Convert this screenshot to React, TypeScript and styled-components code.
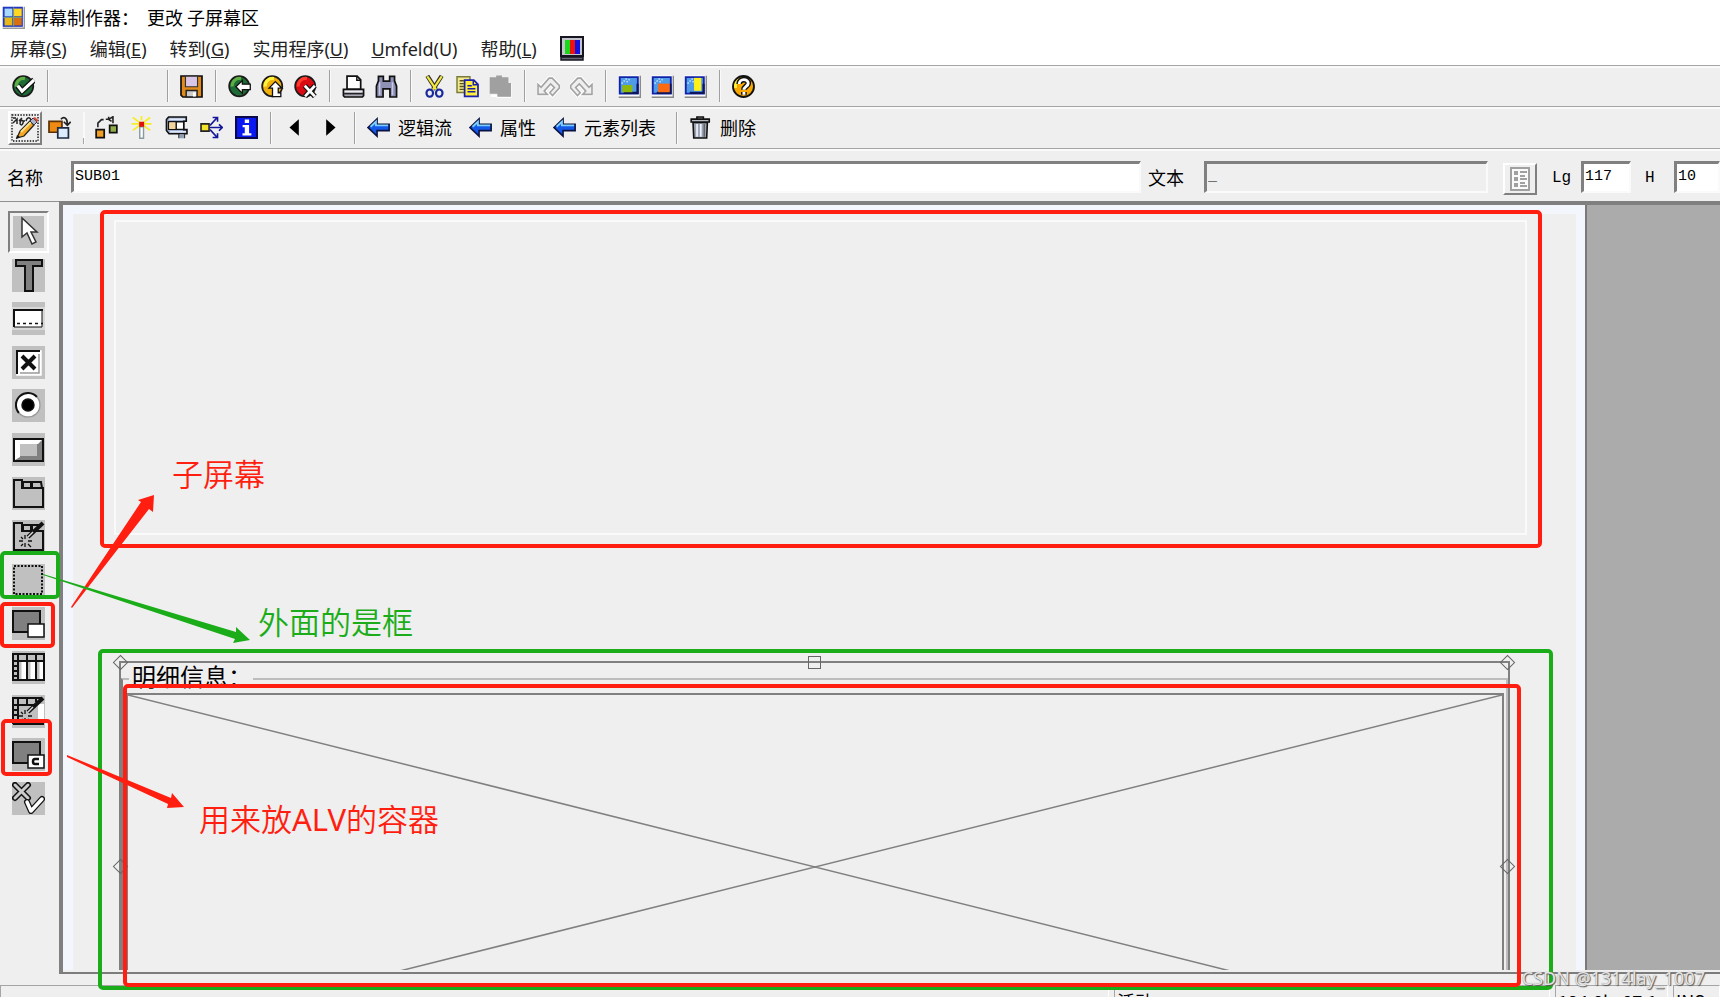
import React from 'react';
import styled, { createGlobalStyle, css } from 'styled-components';

const RED = '#ff1e10';
const GREEN = '#1bad19';
const FACE = '#efefef';

const Global = createGlobalStyle`
  *, *::before, *::after { box-sizing: border-box; }
  html, body { margin: 0; height: 100%; overflow: hidden; }
  #root { height: 100%; }
  button, input { font: inherit; color: inherit; margin: 0; padding: 0; border: 0; background: none; border-radius: 0; }
  svg { display: block; flex: none; }
`;

const Page = styled.div`
  position: relative;
  display: flex;
  flex-direction: column;
  height: 100%;
  overflow: hidden;
  background: ${FACE};
  color: #000;
  font: 18px/24px "Noto Sans CJK SC", sans-serif;
`;

const TitleBar = styled.header`
  display: flex;
  align-items: center;
  gap: 6px;
  height: 34px;
  padding: 0 2px;
  background: #fff;
`;

const Title = styled.h1`
  margin: 0;
  padding-bottom: 1px;
  font-size: 18px;
  font-weight: 400;
  white-space: pre;
`;

const MenuBar = styled.nav`
  display: flex;
  align-items: center;
  gap: 23px;
  height: 31px;
  padding: 0 10px 2px;
  background: #fff;
  color: #222;
`;

const MenuItem = styled.button`
  font-family: "Noto Sans", "Noto Sans CJK SC", sans-serif;
  line-height: 24px;
  white-space: nowrap;
`;

const ToolBar = styled.div`
  display: flex;
  align-items: center;
  height: ${(p: { $h: number }) => p.$h}px;
  border-top: 1px solid #a5a5a5;
  box-shadow: inset 0 2px #fafafa;
`;

const Group = styled.div<{ $gap?: number; $start?: number; $end?: number }>`
  display: flex;
  align-items: center;
  gap: ${(p) => p.$gap ?? 10}px;
  padding: 0 ${(p) => p.$end ?? 12}px 0 ${(p) => p.$start ?? 12}px;
`;

const Separator = styled.i<{ $faint?: boolean }>`
  width: 1px;
  height: 32px;
  background: ${(p) => (p.$faint ? 'linear-gradient(#fafafa 80%, #a5a5a5 80%)' : '#a0a0a0')};
  box-shadow: 1px 0 #fafafa;
`;

const CommandField = styled.input`
  width: 119px;
  height: 26px;
  outline: 0;
`;

const ToolButton = styled.button<{ $pressed?: boolean }>`
  display: flex;
  align-items: center;
  gap: 8px;
  white-space: nowrap;
  line-height: 22px;
  ${(p) =>
    p.$pressed &&
    css`
      justify-content: center;
      width: 34px;
      height: 34px;
      border: 2px solid;
      border-color: #fff #808080 #808080 #fff;
    `}
`;

const Caption = styled.span`
  padding-bottom: 2px;
`;

const FieldRow = styled.form`
  display: flex;
  align-items: flex-start;
  height: 53px;
  padding: 12px 0 0 7px;
  border-top: 1px solid #a5a5a5;
  box-shadow: inset 0 2px #fafafa;
  overflow: hidden;
`;

const FieldLabel = styled.label<{ $w: number; $pad?: number; $mono?: boolean }>`
  flex: none;
  width: ${(p) => p.$w}px;
  padding-left: ${(p) => p.$pad ?? 0}px;
  line-height: 32px;
  ${(p) => p.$mono && 'font-family: "Liberation Mono", monospace; font-size: 16px; line-height: 34px;'}
`;

const Field = styled.input<{ $w?: number; $off?: boolean }>`
  flex: ${(p) => (p.$w ? `0 0 ${p.$w}px` : '1 1 0')};
  min-width: 0;
  height: 32px;
  padding: 0 1px 3px;
  border: solid;
  border-width: 3px 2px 2px 3px;
  border-color: #808080 #fafafa #fafafa #808080;
  background: ${(p) => (p.$off ? FACE : '#fff')};
  font-family: "Liberation Mono", monospace;
  font-size: 15px;
`;

const ListButton = styled.button`
  display: flex;
  flex: none;
  align-items: center;
  justify-content: center;
  width: 34px;
  height: 32px;
  margin: 2px 15px 0;
  border: 2px solid;
  border-color: #fff #808080 #808080 #fff;
`;

const Workspace = styled.main`
  display: flex;
  flex: 1;
  min-height: 0;
`;

const ToolBox = styled.aside`
  flex: none;
  width: 59px;
  padding-top: 14px;
  border-top: 1px solid #909090;
`;

const ToolList = styled.div`
  display: flex;
  flex-direction: column;
  align-items: center;
  justify-content: space-between;
  height: 599px;
  padding-right: 2px;
`;

const BoxTool = styled.button<{ $active?: boolean }>`
  display: block;
  height: 33px;
  background: #c0c0c0;
  ${(p) =>
    p.$active &&
    css`
      height: 42px;
      margin: -5px 0;
      border: solid;
      border-width: 2px;
      border-color: #808080 #fff #fff #808080;
      outline: 3px solid ${FACE};
      outline-offset: -5px;
      padding: 3px 2px 2px;
    `}
`;

const Frame = styled.section`
  display: flex;
  flex: 1;
  min-width: 0;
  border-top: 4px solid #808080;
  border-left: 4px solid #808080;
  border-bottom: 2px solid #7c7c7c;
  padding-bottom: 2px;
`;

const Canvas = styled.div`
  position: relative;
  flex: 1;
  min-width: 0;
  overflow: hidden;
  border: solid #f3f6fd;
  border-width: 9px 9px 0 10px;
`;

const Outside = styled.div`
  flex: none;
  width: 135px;
  border-left: 2px solid #7a7a7a;
  background: #ababab;
`;

const SubArea = styled.div`
  position: absolute;
  top: 6px;
  left: 41px;
  right: 49px;
  height: 315px;
  border: 2px solid #fafafa;
`;

const Selection = styled.div`
  position: absolute;
  top: 447px;
  left: 46px;
  right: 66px;
  height: 412px;
  border: 2px solid #808080;
`;

const GroupBox = styled.fieldset`
  position: absolute;
  top: 2px;
  left: 0;
  right: 0;
  height: 420px;
  min-width: 0;
  margin: 0;
  padding: 0;
  border: 2px solid #bcbcbc;
  border-left-color: #808080;
`;

const Legend = styled.legend`
  height: 28px;
  margin-left: 6px;
  padding: 0 1px 0 3px;
  font-size: 24px;
  line-height: 22px;
`;

const Container = styled.div`
  position: absolute;
  top: 30px;
  left: 4px;
  right: 4px;
  height: 348px;
  border: 2px solid #808080;
  border-left-width: 3px;
`;

const Cross = styled.svg`
  width: 100%;
  height: 100%;
`;

const Handle = styled.i<{ $x: string; $y: number; $square?: boolean }>`
  position: absolute;
  left: ${(p) => p.$x};
  top: ${(p) => p.$y}px;
  width: ${(p) => (p.$square ? 13 : 11)}px;
  height: ${(p) => (p.$square ? 13 : 11)}px;
  margin: ${(p) => (p.$square ? -7 : -6)}px;
  border: 1px solid #666;
  ${(p) => !p.$square && 'transform: rotate(45deg);'}
`;

const StatusBar = styled.footer`
  display: flex;
  align-items: flex-start;
  gap: 5px;
  flex: none;
  height: 23px;
  padding-top: 11px;
  overflow: hidden;
`;

const StatusCell = styled.div<{ $w?: number }>`
  flex: ${(p) => (p.$w ? `0 0 ${p.$w}px` : '1 1 0')};
  height: 30px;
  padding: 3px 2px 0;
  border: 1px solid;
  border-color: #a5a5a5 #fff #fff #a5a5a5;
  line-height: 24px;
  white-space: nowrap;
`;

const Marks = styled.div`
  position: absolute;
  inset: 0;
  pointer-events: none;
`;

const MarkFrame = styled.div<{ $c: string; $x: number; $y: number; $h: number; $w?: number; $right?: number }>`
  position: absolute;
  left: ${(p) => p.$x}px;
  top: ${(p) => p.$y}px;
  height: ${(p) => p.$h}px;
  ${(p) => (p.$w ? `width: ${p.$w}px;` : `right: ${p.$right}px;`)}
  border: 4px solid ${(p) => p.$c};
  border-radius: 5px;
`;

const Note = styled.p<{ $c: string; $x: number; $y: number }>`
  position: absolute;
  left: ${(p) => p.$x}px;
  top: ${(p) => p.$y}px;
  margin: 0;
  color: ${(p) => p.$c};
  font: 31px/40px "Noto Sans", "Noto Sans CJK SC", sans-serif;
  font-weight: 350;
  white-space: nowrap;
`;

const Latin = styled.span`
  font-weight: 400;
`;

const Arrows = styled.svg`
  position: absolute;
  left: 0;
  top: 480px;
`;

const Watermark = styled.span`
  position: absolute;
  right: 15px;
  bottom: 7px;
  color: #e4e4e4;
  font: 18px/24px "Noto Sans", sans-serif;
  text-shadow: 1px 1px 1px #555, 0 0 1px #888;
`;

/* 16-unit toolbar glyphs */
const Glyph = ({ children, size = 23 }: { children: React.ReactNode; size?: number }) => (
  <svg width={size} height={size} viewBox="0 0 16 16" aria-hidden="true">
    {children}
  </svg>
);

const Ball = ({ fill, lit, edge = '#1a1a1a' }: { fill: string; lit: string; edge?: string }) => (
  <>
    <circle cx="7.8" cy="7.8" r="7" fill={fill} stroke={edge} strokeWidth="1.2" />
    <path d="M3 8a5 5 0 0 1 6-5.5" fill="none" stroke={lit} strokeWidth="2.2" />
  </>
);

const OkIcon = () => (
  <Glyph>
    <Ball fill="#1d6b35" lit="#5fae45" />
    <path d="M4 7.6l3 3.6L15.4 3.4" fill="none" stroke="#111" strokeWidth="4" />
    <path d="M4 7.4l3 3.8L15.4 3.4" fill="none" stroke="#fff" strokeWidth="2.2" />
  </Glyph>
);
const SaveIcon = () => (
  <Glyph>
    <path d="M.7.7h14.6v14.6H2L.7 14z" fill="#e08a1c" stroke="#111" strokeWidth="1.2" />
    <path d="M3.8.8h8.4v7.4H3.8z" fill="#d9c6e6" stroke="#333" strokeWidth=".8" />
    <path d="M4.3 10.8h7.6v4.4H4.3z" fill="#ccc" stroke="#222" strokeWidth="1" />
    <path d="M9 12h2v3H9z" fill="#fff" />
  </Glyph>
);
const BackIcon = () => (
  <Glyph>
    <Ball fill="#1d6b35" lit="#5fae45" />
    <path d="M5.5 8.2L10 3.8v2.6h5.5v3.8H10v2.6z" fill="#fff" stroke="#111" strokeWidth=".9" />
  </Glyph>
);
const UpIcon = () => (
  <Glyph>
    <Ball fill="#f0b010" lit="#fff23a" />
    <path d="M10 4.6l4.6 4.6h-2.6v3.3h1.8v2.6H8v-6H5.6z" fill="#fff" stroke="#111" strokeWidth=".9" />
  </Glyph>
);
const CancelIcon = () => (
  <Glyph>
    <Ball fill="#d90a12" lit="#ff3a2e" />
    <path d="M7.5 7.5l7 7.4M14.5 7.5l-6.8 7.4" stroke="#111" strokeWidth="3.6" />
    <path d="M7.5 7.5l7 7.4M14.5 7.5l-6.8 7.4" stroke="#fff" strokeWidth="1.9" />
  </Glyph>
);
const PrintIcon = () => (
  <Glyph>
    <path d="M3.5 10V.8h7L13 3.4V10z" fill="#fff" stroke="#111" strokeWidth="1.2" />
    <path d="M10.3.8v2.8H13" fill="none" stroke="#111" />
    <path d="M1 10h14v4.4l-.8.9H1.8l-.8-.9z" fill="#a9a9b8" stroke="#111" strokeWidth="1.2" />
    <path d="M1.8 11.4h12.4" stroke="#eee" />
    <path d="M1.5 13h13" stroke="#222" />
  </Glyph>
);
const FindIcon = () => (
  <Glyph>
    <path d="M1 15.3V7.8L2.4 4V1h3.4v3.2h4.4V1h3.4v3L15 7.8v7.5h-4.6V9.6H5.6v5.7z" fill="#8e90b4" stroke="#111" strokeWidth="1.2" />
    <path d="M3.2 5v9M12.2 5v9" stroke="#c9cbe6" strokeWidth="1" />
  </Glyph>
);
const CutIcon = () => (
  <Glyph>
    <path d="M3 .6l6 9.4M13 .6L7 10" stroke="#333" strokeWidth="3" />
    <path d="M3 1l6 9M13 1L7 10" stroke="#f4e83a" strokeWidth="1.5" />
    <ellipse cx="4.7" cy="12.6" rx="2.3" ry="2.5" fill="none" stroke="#1a2a9c" strokeWidth="1.5" />
    <ellipse cx="11.3" cy="12.6" rx="2.3" ry="2.5" fill="none" stroke="#1a2a9c" strokeWidth="1.5" />
  </Glyph>
);
const CopyIcon = () => (
  <Glyph>
    <path d="M.7 1.2h9v11h-9z" fill="#f3e98c" stroke="#777a3a" />
    <path d="M2.5 4h3M2.5 6h3M2.5 8h3M2.5 10h3" stroke="#55551a" />
    <path d="M6 3.6h6.4L15.3 6.5V14.9H6z" fill="#ffee36" stroke="#1a1fb0" strokeWidth="1.2" />
    <path d="M12 3.8v3h3M8 7.5h3M8 9.6h5.5M8 11.7h5.5" fill="none" stroke="#1a1fb0" />
  </Glyph>
);
const PasteIcon = () => (
  <Glyph>
    <path d="M1.5 14.5H6V16h10.4V6" fill="none" stroke="#fff" strokeWidth="1.5" />
    <path d="M.5 1.5H5V.3h4v1.2h4.500v4h1.800v9.600H5.800v-2H.5z" fill="#a0a0a0" />
  </Glyph>
);
const undoPath = 'M.7 6.500v7h6.500l-2.200-2.300 4.500-5 2.600 2.600-3.200 3.600 1.900 1.900 4.700-5.200V7.300L10.600 2.200H8.400L2.800 8.600z';
const UndoIcon = ({ flip }: { flip?: boolean }) => (
  <Glyph>
    <g transform={flip ? 'translate(16 0) scale(-1 1)' : undefined}>
      <path d={undoPath} fill="none" stroke="#fff" strokeWidth="2.6" />
      <path d={undoPath} fill={FACE} stroke="#a3a3a3" strokeWidth="1.1" />
    </g>
  </Glyph>
);
const WindowIcon = ({ x, y, w, h, fill }: { x: number; y: number; w: number; h: number; fill: string }) => (
  <Glyph>
    <path d="M15.5.5v15H.5" fill="none" stroke="#8a8a8a" />
    <path d="M.3.3h14.4v14H.3z" fill="#fff" />
    <path d="M1.2 1.5h12.6V13H1.2z" fill="#4f9be8" stroke="#1022a8" strokeWidth="1.3" />
    <path d="M2.5 6L6 2.500M6 5l2-2" stroke="#cfe6ff" strokeDasharray="1 1" />
    <path d="M4 12.4h9.600V6" fill="none" stroke="#0d1560" strokeWidth="1.5" />
    <rect x={x} y={y} width={w} height={h} fill={fill} />
  </Glyph>
);
const HelpIcon = () => (
  <Glyph>
    <circle cx="8" cy="8" r="7.3" fill="#f6a800" stroke="#111" strokeWidth="1.3" />
    <path d="M2.5 9A5.500 5.500 0 0 1 6 2.800" fill="none" stroke="#fff23a" strokeWidth="2" />
    <path d="M5 6.300C5 2.200 11.400 2.400 11.300 5.800 11.200 7.800 8.300 8 8.300 10.300M8.300 11.800v2" fill="none" stroke="#111" strokeWidth="4" />
    <path d="M5 6.300C5 2.200 11.400 2.400 11.300 5.800 11.200 7.800 8.300 8 8.300 10.300M8.300 11.800v2" fill="none" stroke="#fff" strokeWidth="2" />
  </Glyph>
);
const PencilIcon = () => (
  <svg width="30" height="30" viewBox="0 0 30 30" aria-hidden="true">
    <path d="M2 2h26v26H2z" fill="none" stroke="#111" strokeWidth="1.4" strokeDasharray="1.4 1.4" />
    <path d="M3 5h3M3 10l4-4v5M9 8l3-3M10 10c1-4 4-3 3 0s-3 2-3 0M16 8c1-4 4-4 5-1M15 8h-2" fill="none" stroke="#222" strokeWidth="1.5" />
    <path d="M7 25l3-7L20 8l4 4-10 11z" fill="#f5a623" stroke="#222" strokeWidth="1.3" />
    <path d="M11 19L21 9" stroke="#ffe08a" strokeWidth="2" />
    <path d="M20 8l3-3 4 4-3 3z" fill="#a9b4cc" stroke="#334" />
    <path d="M23 5l2-1 3 3-1 2z" fill="#dd4a3a" />
    <path d="M6 26l1-4 3 2z" fill="#111" />
  </svg>
);
const SwapIcon = () => (
  <Glyph>
    <path d="M.7 3.800h9v7.500h-9z" fill="#f08a12" stroke="#5a3208" strokeWidth="1.2" />
    <path d="M6.800 8.300h7.400v7H6.800z" fill="#dcecff" stroke="#1d2a44" strokeWidth="1.2" />
    <path d="M9 2.300c2-2.300 4.600-1 4.400 3.500M11 4l2.500 2.500L15.800 4" fill="none" stroke="#222" strokeWidth="1.2" />
  </Glyph>
);
const FlowIcon = () => (
  <Glyph>
    <path d="M.8 9.500h5.600V15H.8z" fill="#f0a020" stroke="#111" strokeWidth="1.2" />
    <path d="M10.200 6.500h5v5h-5z" fill="#8fae4a" stroke="#111" strokeWidth="1.2" />
    <path d="M2 7.800V5l2.500-2.500H6M7.500 2.300h2L12.500.500V5M9.500 2.300V.500M9.500 2.300l2 1.500" fill="none" stroke="#222" strokeWidth="1.1" />
  </Glyph>
);
const WandIcon = () => (
  <Glyph>
    <path d="M2 1l12 9M14 1L2 10M8 0v3M1 5.500h14" stroke="#f7ee2a" strokeWidth="1.3" />
    <path d="M6.800 7.500h2.600v8H6.800z" fill="#fff" stroke="#8a9aa0" />
    <path d="M6.400 4h3.400v3.500H6.400z" fill="#e01010" />
  </Glyph>
);
const CheckToolIcon = () => (
  <Glyph>
    <path d="M1 10V2.500L2.500.700h12.300v3H13v5.800h2.300v2.800H2.800z" fill="#9fb0d0" stroke="#111" strokeWidth="1.1" />
    <path d="M3 2.300h11M3.500 11h11" stroke="#dfe8f8" />
    <path d="M2.500 4h10.500v5.300H2.500z" fill="#fff" stroke="#111" />
    <path d="M3 4.500h4.500V9H3z" fill="#f3d49a" />
    <path d="M7.800 4v5.300" stroke="#111" />
    <path d="M9.700 12.500v3M13.500 12.500v3" stroke="#333" />
    <path d="M10.200 12.800h2.800v2.700h-2.800z" fill="#8fa0b8" />
  </Glyph>
);
const SpreadIcon = () => (
  <Glyph>
    <path d="M.7 5.500h5.600v5H.7z" fill="#f4e22a" stroke="#222" strokeWidth="1.1" />
    <path d="M6.500 8h9M7 6.500L12 1M7 9.500L12 15M8.800 1h3.400v3M8.800 15h3.400v-3M13.200 5.800L15.500 8l-2.300 2.300" fill="none" stroke="#14149c" strokeWidth="1.1" />
  </Glyph>
);
const InfoIcon = () => (
  <Glyph>
    <path d="M.7.700h14.600v14.600H.7z" fill="#0a1af0" stroke="#0a0a4a" strokeWidth="1.4" />
    <path d="M6.800 2.500h3v2.300h-3zM5.300 6.200h4.500v5.800h1.600v1.600H5.200V12h1.600V7.800H5.300z" fill="#fff" />
  </Glyph>
);
const TriIcon = ({ right }: { right?: boolean }) => (
  <Glyph>
    <path d={right ? 'M5 2.200L11.500 8 5 13.800z' : 'M11 2.200L4.500 8 11 13.800z'} fill="#000" />
  </Glyph>
);
const ArrowIcon = () => (
  <Glyph>
    <path d="M.7 8L7 2v3.700h8.400v4.500H7V14z" fill="#1458e8" stroke="#0a1240" strokeWidth="1.1" />
    <path d="M2.500 7.500L6.200 4v2.500h8.500" fill="none" stroke="#7cd0ff" strokeWidth="1.3" />
  </Glyph>
);
const TrashIcon = () => (
  <Glyph>
    <path d="M2.800 4.500h10l-.5 10.800h-9z" fill="#9aa2ae" stroke="#111" strokeWidth="1.1" />
    <path d="M5.600 5.500v9M8.200 5.500v9" stroke="#eef" strokeWidth="1.2" />
    <path d="M10.600 5.500v9" stroke="#555" strokeWidth=".8" />
    <path d="M1.500 2.200h12.600v2H1.500zM5.500 2V.700h4.500V2" fill="#b4bac4" stroke="#111" strokeWidth="1.1" />
  </Glyph>
);
const LogoIcon = () => (
  <Glyph>
    <path d="M.5 15.500h15V.500" fill="none" stroke="#999" />
    <path d="M.5.500h14v14H.5z" fill="#2038c0" />
    <path d="M1.800 1.800h5.400v5.400H1.800z" fill="#a8d8ff" />
    <path d="M8.200 1.800h5.500v5.400H8.200z" fill="#ffd820" />
    <path d="M1.800 8.200h5.400v5.300H1.800z" fill="#e8b818" />
    <path d="M8.200 8.200h5.500v5.300H8.200z" fill="#d87010" />
    <path d="M8 1v13M1 8h13" stroke="#7f9a70" strokeWidth=".8" />
  </Glyph>
);
const LayoutIcon = () => (
  <svg width="25" height="26" viewBox="0 0 25 26" aria-hidden="true">
    <path d="M1 1h22v19H1z" fill="#c4c4cc" stroke="#161622" strokeWidth="2" />
    <path d="M5 4h5v14H5z" fill="#18d818" />
    <path d="M10 4h5v14h-5z" fill="#f01010" />
    <path d="M15 4h5v14h-5z" fill="#1010e0" />
    <path d="M1 21h22v3H1z" fill="#667" stroke="#161622" strokeWidth="1.5" />
  </svg>
);
const ListIcon = () => (
  <svg width="20" height="24" viewBox="0 0 20 24" aria-hidden="true">
    <path d="M1 1h18v22H1z" fill="#fafafa" stroke="#a0a0a0" strokeWidth="2" />
    <path d="M4 4h4v4H4zM4 10h4v4H4zM4 16h4v4H4z" fill="#a0a0a0" />
    <path d="M10 5h7M10 9h5M10 12h7M10 16h5M10 19h7" stroke="#a0a0a0" strokeWidth="2" />
  </svg>
);

/* 33-unit tool box glyphs */
const Tool = ({ children }: { children: React.ReactNode }) => (
  <svg width="33" height="33" viewBox="0 0 33 33" fill="none" stroke="#111" strokeWidth="1.5" aria-hidden="true">
    {children}
  </svg>
);
const Wand = () => (
  <>
    <path d="M31 3L16 17" stroke="#111" strokeWidth="4" />
    <path d="M21 12l-5 5" stroke="#ddd" strokeWidth="1.5" />
    <path d="M13 15v4M13 23v4M7 21h4M16 21h4M9 17l2 2M16 24l3 3M9 26l2-2" strokeWidth="1.3" />
  </>
);
const tools: [string, React.ReactNode][] = [
  ['选择', <path d="M10 2v19l5-4 5 11 4-2-5-10h6z" fill="#fff" stroke="#333" />],
  ['文本', <path d="M4 1h26v6h-9v25h-8V7H4z" fill="#808080" strokeWidth="2" />],
  ['输入域', <><path d="M0 5h33v23H0z" fill="#d8d8d8" stroke="none" /><path d="M2 8h28v17H2z" fill="#fff" strokeWidth="1" /><path d="M2 25V8h29" strokeWidth="2" /><path d="M5 21.500h26" strokeDasharray="3 3" /></>],
  ['复选框', <><path d="M5 5h24v24H5z" fill="#fff" stroke="#fff" /><path d="M5 28V5h23" strokeWidth="2" /><path d="M8 27h19V8" stroke="#999" /><path d="M10 10l13 13M23 10L10 23" strokeWidth="4" /></>],
  ['单选按钮', <><circle cx="16" cy="16" r="11" fill="#fff" stroke="#fff" strokeWidth="3" /><path d="M7 24A11 11 0 1 1 25 8" strokeWidth="2" /><path d="M25 8A11 11 0 0 1 7 24" stroke="#999" /><circle cx="16" cy="16" r="6" fill="#000" /></>],
  ['按钮', <><path d="M2 6h29v22H2z" fill="#808080" strokeWidth="2" /><path d="M3 7h27l-4 4H8v13l-5 3z" fill="#fff" stroke="none" /><path d="M8 11h17v12H8z" fill="#c0c0c0" stroke="none" /></>],
  ['选项卡', <path d="M2 30V3h8v8h21v19zM11 11V5h8v6M20 11V5h9l1 6" strokeWidth="2" />],
  ['选项卡向导', <><path d="M2 30V3h8v8h21v19zM11 11V5h8v6M20 11V5h9" strokeWidth="2" /><Wand /></>],
  ['框', <path d="M2 2h28v28H2z" strokeWidth="2" strokeDasharray="2 1.5" />],
  ['子屏幕', <><path d="M1 4h27v21H1z" fill="#808080" strokeWidth="2" /><path d="M16 17h16v13H16z" fill="#fff" /></>],
  ['表控制', <><path d="M6 9h26v20H6z" fill="#fff" stroke="none" /><path d="M8 10v18M17 10v18M26 10v18" stroke="#c0c0c0" strokeWidth="3" /><path d="M1 3h31v26H1zM1 10h31M6 3v26M15 3v26M24 3v26M1 15h5M1 20h5M1 25h5" strokeWidth="2" /></>],
  ['表控制向导', <><path d="M26 9h6v20h-6z" fill="#fff" stroke="none" /><path d="M1 29V3h28M1 10h22M6 3v26M15 3v7M24 3v4M1 15h5M1 20h5M1 25h5M1 29h31" strokeWidth="2" /><Wand /></>],
  ['定制控制', <><path d="M1 4h27v21H1z" fill="#808080" strokeWidth="2" /><path d="M16 17h16v13H16z" fill="#fff" /><path d="M27 21h-4q-2 0-2 2.500t2 2.500h4" strokeWidth="2.5" /></>],
  ['状态图标', <><path d="M3 3l13 13M16 3L3 16" strokeWidth="6" strokeLinecap="round" /><path d="M3 3l13 13M16 3L3 16" stroke="#ccc" strokeWidth="3" strokeLinecap="round" /><path d="M15 20l4 9L30 17" strokeWidth="6" strokeLinecap="round" strokeLinejoin="round" /><path d="M15 20l4 9L30 17" stroke="#fff" strokeWidth="3.5" strokeLinecap="round" strokeLinejoin="round" /></>],
];

const menus: [string, string][] = [['屏幕', 'S'], ['编辑', 'E'], ['转到', 'G'], ['实用程序', 'U']];

export default function App() {
  return (
    <Page>
      <Global />
      <TitleBar>
        <LogoIcon />
        <Title>{'屏幕制作器：  更改 子屏幕区'}</Title>
      </TitleBar>
      <MenuBar>
        {menus.map(([name, key]) => (
          <MenuItem key={name}>{name}(<u>{key}</u>)</MenuItem>
        ))}
        <MenuItem><u>U</u>mfeld(U)</MenuItem>
        <MenuItem>帮助(<u>L</u>)</MenuItem>
        <MenuItem aria-label="布局"><LayoutIcon /></MenuItem>
      </MenuBar>

      <ToolBar $h={41}>
        <Group><ToolButton aria-label="确认"><OkIcon /></ToolButton></Group>
        <Separator />
        <CommandField aria-label="命令" />
        <Separator />
        <Group><ToolButton aria-label="保存"><SaveIcon /></ToolButton></Group>
        <Separator />
        <Group>
          <ToolButton aria-label="返回"><BackIcon /></ToolButton>
          <ToolButton aria-label="退出"><UpIcon /></ToolButton>
          <ToolButton aria-label="取消"><CancelIcon /></ToolButton>
        </Group>
        <Separator />
        <Group>
          <ToolButton aria-label="打印"><PrintIcon /></ToolButton>
          <ToolButton aria-label="查找"><FindIcon /></ToolButton>
        </Group>
        <Separator />
        <Group>
          <ToolButton aria-label="剪切"><CutIcon /></ToolButton>
          <ToolButton aria-label="复制"><CopyIcon /></ToolButton>
          <ToolButton aria-label="粘贴"><PasteIcon /></ToolButton>
        </Group>
        <Separator />
        <Group>
          <ToolButton aria-label="撤销"><UndoIcon /></ToolButton>
          <ToolButton aria-label="重做"><UndoIcon flip /></ToolButton>
        </Group>
        <Separator />
        <Group>
          <ToolButton aria-label="窗口一"><WindowIcon x={3} y={7} w={7} h={5} fill="#8fb80a" /></ToolButton>
          <ToolButton aria-label="窗口二"><WindowIcon x={5} y={6} w={8} h={6} fill="#ff6a10" /></ToolButton>
          <ToolButton aria-label="窗口三"><WindowIcon x={7} y={2} w={5} h={9} fill="#fff01a" /></ToolButton>
        </Group>
        <Separator />
        <Group><ToolButton aria-label="帮助"><HelpIcon /></ToolButton></Group>
      </ToolBar>

      <ToolBar $h={42}>
        <Group $gap={6} $start={8}>
          <ToolButton $pressed aria-label="显示/更改"><PencilIcon /></ToolButton>
          <ToolButton aria-label="其他对象"><SwapIcon /></ToolButton>
        </Group>
        <Separator $faint />
        <Group $gap={12} $start={11}>
          <ToolButton aria-label="激活"><FlowIcon /></ToolButton>
          <ToolButton aria-label="向导"><WandIcon /></ToolButton>
          <ToolButton aria-label="检查"><CheckToolIcon /></ToolButton>
          <ToolButton aria-label="使用处"><SpreadIcon /></ToolButton>
          <ToolButton aria-label="信息"><InfoIcon /></ToolButton>
        </Group>
        <Separator />
        <Group $gap={13}>
          <ToolButton aria-label="上一个"><TriIcon /></ToolButton>
          <ToolButton aria-label="下一个"><TriIcon right /></ToolButton>
        </Group>
        <Separator />
        <Group $gap={17} $end={20}>
          <ToolButton><ArrowIcon /><Caption>逻辑流</Caption></ToolButton>
          <ToolButton><ArrowIcon /><Caption>属性</Caption></ToolButton>
          <ToolButton><ArrowIcon /><Caption>元素列表</Caption></ToolButton>
        </Group>
        <Separator />
        <Group><ToolButton><TrashIcon /><Caption>删除</Caption></ToolButton></Group>
      </ToolBar>

      <FieldRow>
        <FieldLabel htmlFor="f-name" $w={64}>名称</FieldLabel>
        <Field id="f-name" defaultValue="SUB01" />
        <FieldLabel htmlFor="f-text" $w={63} $pad={7}>文本</FieldLabel>
        <Field id="f-text" $w={284} $off defaultValue="_" />
        <ListButton type="button" aria-label="列表"><ListIcon /></ListButton>
        <FieldLabel htmlFor="f-lg" $w={29} $mono>Lg</FieldLabel>
        <Field id="f-lg" $w={50} defaultValue="117" />
        <FieldLabel htmlFor="f-h" $w={43} $pad={14} $mono>H</FieldLabel>
        <Field id="f-h" $w={46} defaultValue="10" />
      </FieldRow>

      <Workspace>
        <ToolBox>
          <ToolList>
            {tools.map(([name, art], i) => (
              <BoxTool key={name} aria-label={name} $active={i === 0}>
                <Tool>{art}</Tool>
              </BoxTool>
            ))}
          </ToolList>
        </ToolBox>
        <Frame>
          <Canvas>
            <SubArea />
            <Selection>
              <GroupBox>
                <Legend>明细信息：</Legend>
              </GroupBox>
              <Container>
                <Cross viewBox="0 0 100 100" preserveAspectRatio="none" aria-hidden="true">
                  <path d="M0 0L100 100M100 0L0 100" stroke="#808080" strokeWidth="1.5" vectorEffect="non-scaling-stroke" />
                </Cross>
              </Container>
              <Handle $x="0%" $y={0} />
              <Handle $x="50%" $y={0} $square />
              <Handle $x="100%" $y={0} />
              <Handle $x="0%" $y={204} />
              <Handle $x="100%" $y={204} />
            </Selection>
          </Canvas>
          <Outside />
        </Frame>
      </Workspace>

      <StatusBar>
        <StatusCell />
        <StatusCell $w={436}>活动</StatusCell>
        <StatusCell $w={113}>134,8k, 87,1</StatusCell>
        <StatusCell $w={47}>INS</StatusCell>
      </StatusBar>

      <Marks>
        <MarkFrame $c={RED} $x={100} $y={210} $right={178} $h={338} />
        <MarkFrame $c={GREEN} $x={98} $y={649} $right={167} $h={341} />
        <MarkFrame $c={RED} $x={123} $y={684} $right={199} $h={303} />
        <MarkFrame $c={GREEN} $x={0} $y={551} $w={60} $h={48} />
        <MarkFrame $c={RED} $x={0} $y={602} $w={55} $h={46} />
        <MarkFrame $c={RED} $x={1} $y={719} $w={51} $h={57} />
        <Arrows width="260" height="340" viewBox="0 480 260 340" aria-hidden="true">
          <path d="M71 607L141 502 138 500 154 495 153 512 149 509 72 608z" fill={RED} />
          <path d="M43 574L236 632 236 627 250 640 233 643 235 639 43 575z" fill={GREEN} />
          <path d="M67 755L171 798 172 793 184 807 167 808 168 804 67 757z" fill={RED} />
        </Arrows>
        <Note $c={RED} $x={172} $y={454}>子屏幕</Note>
        <Note $c={GREEN} $x={258} $y={602}>外面的是框</Note>
        <Note $c={RED} $x={199} $y={799}>用来放<Latin>ALV</Latin>的容器</Note>
        <Watermark>CSDN @1314lay_1007</Watermark>
      </Marks>
    </Page>
  );
}
